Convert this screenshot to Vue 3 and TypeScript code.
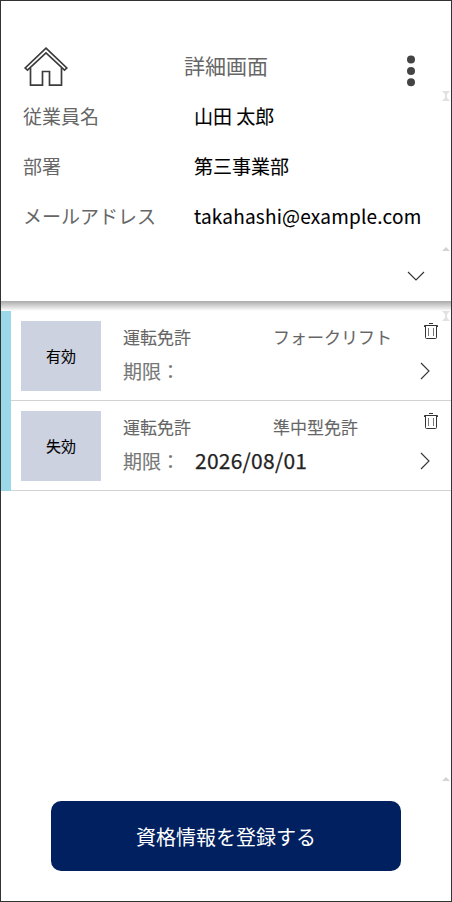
<script setup lang="ts">
interface Field { label: string; value: string; latin?: boolean }
interface License { status: string; category: string; name: string; expires: string }

const fields: Field[] = [
  { label: '従業員名', value: '山田 太郎' },
  { label: '部署', value: '第三事業部' },
  { label: 'メールアドレス', value: 'takahashi@example.com', latin: true },
]

const licenses: License[] = [
  { status: '有効', category: '運転免許', name: 'フォークリフト', expires: '' },
  { status: '失効', category: '運転免許', name: '準中型免許', expires: '2026/08/01' },
]
</script>

<template>
  <main class="screen">
    <header class="header">
      <svg class="home" width="46" height="42" viewBox="0 0 46 42">
        <path d="M23 2.2 L43.8 22 L41.5 24.2 L23 7 L4.5 24.2 L2.2 22 Z" />
        <path d="M7.5 22 V39.2 H19.5 V25.5 H26.5 V39.2 H38.5 V22" />
      </svg>
      <h1 class="title">詳細画面</h1>
      <svg class="more" width="10" height="32" viewBox="0 0 10 32">
        <circle cx="5" cy="4.5" r="4" />
        <circle cx="5" cy="16" r="4" />
        <circle cx="5" cy="27.2" r="4" />
      </svg>
    </header>

    <section class="fields">
      <div v-for="f in fields" :key="f.label" class="field">
        <span class="label">{{ f.label }}</span>
        <span class="value" :class="{ latin: f.latin }">{{ f.value }}</span>
      </div>
      <svg class="mark top" width="8" height="10" viewBox="0 0 8 10"><path d="M0 0H8L5 3.5V6.5L8 10H0L3 6.5V3.5Z" /></svg>
      <svg class="mark bottom" width="8" height="4" viewBox="0 0 8 4"><path d="M0 4H8L4 0Z" /></svg>
    </section>

    <div class="expand">
      <svg class="line-icon" width="18" height="10" viewBox="0 0 18 10"><path d="M1 1 L9 9 L17 1" /></svg>
    </div>
    <div class="shadow"></div>

    <section class="list">
      <article v-for="l in licenses" :key="l.name" class="row">
        <div class="status">{{ l.status }}</div>
        <div class="info">
          <div class="kind">
            <span class="category">{{ l.category }}</span>
            <span>{{ l.name }}</span>
          </div>
          <div class="term">
            <span class="term-label">期限：</span>
            <span class="date">{{ l.expires }}</span>
          </div>
        </div>
        <div class="actions">
          <svg class="trash" width="14" height="17" viewBox="0 0 14 17">
            <path d="M5 .5H9M.5 4V2.5H13.5V4M1.5 3V14.5Q1.5 15.5 2.5 15.5H11.5Q12.5 15.5 12.5 14.5V3" />
            <path class="slots" d="M4.5 5V13M9.5 5V13" />
          </svg>
          <svg class="line-icon next" width="10" height="18" viewBox="0 0 10 18"><path d="M1 1 L9 9 L1 17" /></svg>
        </div>
      </article>
      <svg class="mark top" width="8" height="10" viewBox="0 0 8 10"><path d="M0 0H8L5 3.5V6.5L8 10H0L3 6.5V3.5Z" /></svg>
      <svg class="mark bottom" width="8" height="4" viewBox="0 0 8 4"><path d="M0 4H8L4 0Z" /></svg>
    </section>

    <footer class="footer">
      <button class="register">資格情報を登録する</button>
    </footer>
  </main>
</template>

<style>
body { margin: 0; background: #fff; }
</style>

<style scoped>
.screen {
  box-sizing: border-box;
  width: 452px;
  height: 902px;
  border: 1px solid #333;
  background: #fff;
  display: flex;
  flex-direction: column;
  font-family: "Noto Sans CJK JP", sans-serif;
  color: #666;
  overflow: hidden;
}
svg { display: block; flex: none; }
.header {
  height: 90px;
  flex: none;
  display: grid;
  grid-template-columns: 46px 1fr 10px;
  padding: 0 35px 0 22px;
  align-items: start;
}
.home { margin-top: 45px; fill: none; stroke: #3c3c3c; stroke-width: 1.7; }
.title {
  margin: 49px 0 0 115px;
  font-size: 21px;
  line-height: 30px;
  font-weight: 400;
}
.more { margin-top: 54px; fill: #444; }
.fields { position: relative; height: 160px; flex: none; }
.field {
  height: 50px;
  display: grid;
  grid-template-columns: 171px 1fr;
  padding-left: 22px;
  line-height: 50px;
  font-size: 19px;
  white-space: nowrap;
}
.value { color: #000; -webkit-text-stroke: .1px #000; }
.latin { letter-spacing: .2px; }
.mark { position: absolute; right: 1px; fill: #e2e2e2; }
.mark.top { top: 0; }
.mark.bottom { bottom: 0; fill: #d4d4d4; }
.expand {
  height: 50px;
  flex: none;
  display: flex;
  justify-content: flex-end;
  align-items: center;
  padding-right: 26px;
}
.line-icon { fill: none; stroke: #333; stroke-width: 1.1; }
.shadow { height: 10px; flex: none; background: linear-gradient(#aaa, #fff); }
.list { position: relative; height: 470px; flex: none; }
.row {
  box-sizing: border-box;
  height: 90px;
  display: flex;
  padding: 10px 0 0 10px;
  border-left: 10px solid #9bd9e9;
  background: linear-gradient(#d2d2d2, #d2d2d2) bottom / 100% 1px no-repeat;
}
.status {
  width: 80px;
  height: 70px;
  background: #ccd2e0;
  color: #000;
  -webkit-text-stroke: .1px #000;
  font-size: 15px;
  line-height: 70px;
  text-align: center;
}
.info { margin-left: 22px; width: 290px; white-space: nowrap; }
.kind { display: flex; font-size: 17px; line-height: 32px; -webkit-text-stroke: .1px #666; }
.category { width: 150px; }
.term { display: flex; font-size: 19px; line-height: 36px; color: #777; }
.term-label { width: 72px; -webkit-text-stroke: .1px #777; }
.date { color: #222; font-size: 21px; line-height: 34px; -webkit-text-stroke: .25px #222; letter-spacing: .25px; }
.actions { width: 28px; padding-top: 2px; }
.trash { margin-left: 11px; fill: none; stroke: #333; stroke-width: 1; }
.slots { stroke: #777; }
.next { margin: 22px 0 0 7px; }
.footer { padding-top: 20px; display: flex; justify-content: center; }
.register {
  width: 350px;
  height: 70px;
  border: 0;
  border-radius: 10px;
  background: #00205f;
  color: #fff;
  font: 400 20px "Noto Sans CJK JP", sans-serif;
}
</style>
